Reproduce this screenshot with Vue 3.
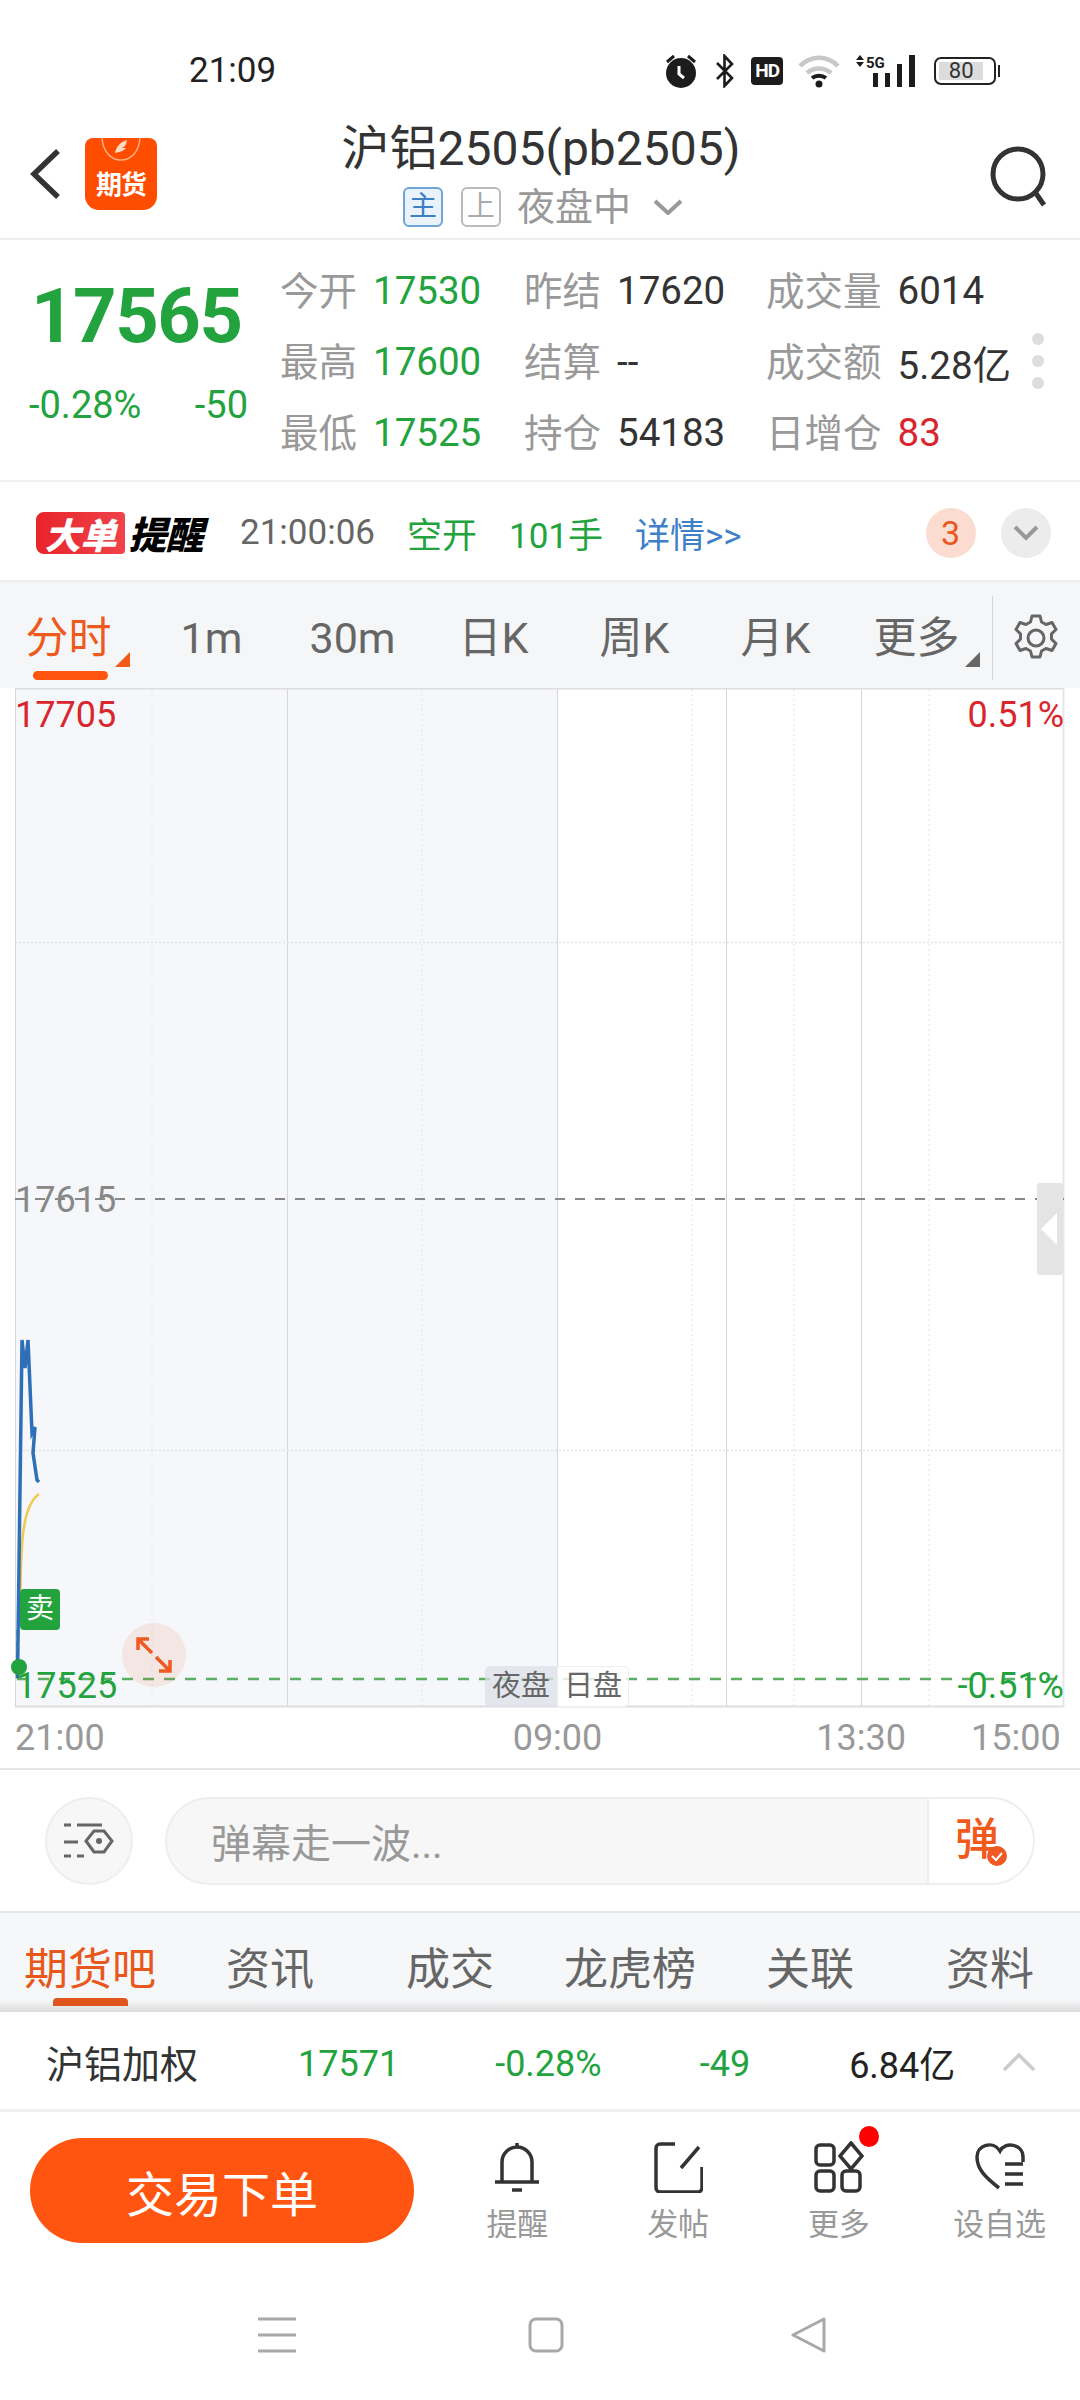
<template>
  <div class="page">
    <!-- 状态栏 -->
    <div class="status">
      <span class="clock">21:09</span>
      <div class="status-icons">
        <svg width="36" height="36" viewBox="0 0 36 36">
          <circle cx="18" cy="20" r="15" fill="#1c1c1c" />
          <path d="M4 9l7-6M32 9l-7-6" stroke="#1c1c1c" stroke-width="3" />
          <path d="M16 13v8l5 4" stroke="#fff" stroke-width="3" fill="none" />
        </svg>
        <svg width="22" height="34" viewBox="0 0 22 34">
          <path d="M3 9l15 15-7.500 8V2l7.500 8L3 25" stroke="#1c1c1c" stroke-width="2.600" fill="none" />
        </svg>
        <div class="hd">HD</div>
        <svg width="42" height="34" viewBox="0 0 42 34">
          <path d="M2 12c11-11 27-11 38 0M9 19c7-6 17-6 24 0" stroke="#c8c8c8" stroke-width="4.500" fill="none" />
          <path d="M14 24c4-3 10-3 14 0" stroke="#1c1c1c" stroke-width="4" fill="none" />
          <circle cx="21" cy="30" r="3.500" fill="#1c1c1c" />
        </svg>
        <svg width="66" height="34" viewBox="0 0 66 34">
          <path d="M5 1l4 5H1zM5 13l4-5H1z" fill="#1c1c1c" />
          <text x="11" y="14" class="five-g">5G</text>
          <path d="M18 19h5v14h-5zM30 19h5v14h-5zM42 10h5v23h-5zM54 1h6v32h-6z" fill="#1c1c1c" />
        </svg>
        <div class="battery"><span>80</span></div>
      </div>
    </div>

    <!-- 标题 -->
    <header class="head">
      <svg class="back" width="34" height="52" viewBox="0 0 34 52">
        <path d="M30 3L6 26l24 23" stroke="#333" stroke-width="5.500" fill="none" />
      </svg>
      <div class="logo">
        <svg width="72" height="28" viewBox="0 0 72 28">
          <path d="M17 0c1 14 9 22 19 22S54 14 55 0" stroke="#ffb08a" stroke-width="1.500" fill="none" />
          <path d="M42 2c-7 2-11 7-12 13 5-1 9-2 11-5-2 0-3 0-4 0 2-1 4-2 5-8z" fill="#ffd9c4" />
        </svg>
        <span>期货</span>
      </div>
      <div class="head-mid">
        <div class="head-title">沪铝2505(pb2505)</div>
        <div class="head-sub">
          <span class="tag tag-on">主</span>
          <span class="tag">上</span>
          <span class="sub-text">夜盘中</span>
          <svg width="30" height="16" viewBox="0 0 30 16">
            <path d="M2 2l13 12L28 2" stroke="#999" stroke-width="4" fill="none" />
          </svg>
        </div>
      </div>
      <svg class="search" width="60" height="62" viewBox="0 0 60 62">
        <circle cx="28" cy="28" r="25" stroke="#333" stroke-width="5" fill="none" />
        <path d="M45 46l9 13" stroke="#333" stroke-width="5" fill="none" />
      </svg>
    </header>

    <!-- 行情 -->
    <section class="quote">
      <div class="quote-main">
        <div class="price">17565</div>
        <div class="change"><span>-0.28%</span><span>-50</span></div>
      </div>
      <div class="quote-grid">
        <div v-for="item in quoteItems" :key="item.label" class="quote-item">
          <span class="q-label">{{ item.label }}</span>
          <span :class="['q-value', item.tone]">{{ item.value }}</span>
        </div>
      </div>
      <div class="dots"><i></i><i></i><i></i></div>
    </section>

    <!-- 大单提醒 -->
    <section class="alert">
      <div class="alert-logo"><span class="alert-red">大单</span><span class="alert-black">提醒</span></div>
      <span class="alert-time">21:00:06</span>
      <span class="alert-open">空开</span>
      <span class="alert-hand">101手</span>
      <span class="alert-link">详情&gt;&gt;</span>
      <span class="alert-count">3</span>
      <span class="alert-more">
        <svg width="26" height="16" viewBox="0 0 26 16">
          <path d="M2 2l11 11L24 2" stroke="#999" stroke-width="4" fill="none" />
        </svg>
      </span>
    </section>

    <!-- 周期 -->
    <nav class="periods">
      <div
        v-for="p in periods"
        :key="p.name"
        :class="['period', { 'period-on': p.on, 'period-tri': p.tri }]"
      >
        {{ p.name }}
      </div>
      <div class="gear">
        <svg width="48" height="50" viewBox="0 0 48 50">
          <path
            d="M20 3h8l1.500 6 4.500 2.500 6-2 4 7-4.500 4.300v5.400l4.500 4.300-4 7-6-2-4.500 2.500-1.500 6h-8l-1.500-6-4.500-2.500-6 2-4-7 4.500-4.300v-5.400L4 16.500l4-7 6 2 4.500-2.500z"
            stroke="#666"
            stroke-width="3"
            stroke-linejoin="round"
            fill="none"
          />
          <circle cx="24" cy="25" r="8" stroke="#666" stroke-width="3" fill="none" />
        </svg>
      </div>
    </nav>

    <!-- 分时图 -->
    <section class="chart">
      <svg class="chart-svg" width="1080" height="1020" viewBox="0 688 1080 1020">
        <rect x="15" y="688" width="542" height="1019" fill="#f5f7fa" />
        <path
          v-for="x in dottedX"
          :key="'d' + x"
          :d="`M${x} 689V1706`"
          stroke="#e4e4e4"
          stroke-width="1"
          stroke-dasharray="2 3"
        />
        <path
          v-for="x in solidX"
          :key="'s' + x"
          :d="`M${x}.5 689V1706`"
          stroke="#d6d6d6"
          stroke-width="1"
        />
        <path d="M15 942.500H1064M15 1450.500H1064" stroke="#e2e2e2" stroke-width="1.500" stroke-dasharray="2 2" />
        <path d="M15 688.500H1064M15 1706.500H1064" stroke="#dedede" stroke-width="2" />
        <path d="M1063.500 688V1707" stroke="#e6e6e6" stroke-width="2" />
        <path d="M15 1199H1064" stroke="#888" stroke-width="2" stroke-dasharray="10 10" />
        <path d="M17 1679H1064" stroke="#5cae62" stroke-width="2.500" stroke-dasharray="11 10" />
        <path d="M17.500 1630V1679" stroke="#5cae62" stroke-width="2.500" stroke-dasharray="6 5" />
        <path d="M20.500 1590C21 1540 23 1505 39 1494" stroke="#f2c94c" stroke-width="2.500" fill="none" />
        <path
          d="M17.500 1678L22 1340 25 1368 28 1340 32 1433 35 1427 33 1453 37 1480 39 1482"
          stroke="#2f6fb8"
          stroke-width="3.500"
          fill="none"
        />
        <circle cx="19" cy="1667" r="8" fill="#22a33e" />
      </svg>

      <span class="c-label c-top-left">17705</span>
      <span class="c-label c-top-right">0.51%</span>
      <span class="c-label c-mid-left">17615</span>
      <span class="c-label c-low-left">17525</span>
      <span class="c-label c-low-right">-0.51%</span>
      <span class="sell">卖</span>
      <span class="zoom-btn">
        <svg width="38" height="38" viewBox="0 0 38 38">
          <path d="M3 3l14 14M3 14V3h11M35 35L21 21M35 24v11H24" stroke="#f05a22" stroke-width="3.500" fill="none" />
        </svg>
      </span>
      <div class="handle">
        <svg width="18" height="32" viewBox="0 0 18 32"><path d="M17 0v32L1 16z" fill="#fff" /></svg>
      </div>
      <div class="session">
        <span class="session-night">夜盘</span>
        <span class="session-day">日盘</span>
      </div>
    </section>

    <div class="axis">
      <span class="axis-a">21:00</span>
      <span class="axis-b">09:00</span>
      <span class="axis-c">13:30</span>
      <span class="axis-d">15:00</span>
    </div>

    <!-- 弹幕 -->
    <section class="danmu">
      <div class="danmu-set">
        <svg width="50" height="38" viewBox="0 0 50 38">
          <path d="M0 3h7M13 3h25M0 20h14M0 34h7M13 34h7" stroke="#666" stroke-width="3" fill="none" />
          <path d="M30 9h10l8 10-8 11H30l-8-11z" stroke="#666" stroke-width="3" fill="none" />
          <circle cx="35" cy="19" r="3" fill="#666" />
        </svg>
      </div>
      <div class="danmu-input">
        <span class="danmu-hint">弹幕走一波...</span>
        <span class="danmu-send">
          弹
          <svg class="danmu-check" width="20" height="20" viewBox="0 0 20 20">
            <circle cx="10" cy="10" r="10" fill="#f05a22" />
            <path d="M5 10l4 4 6-7" stroke="#fff" stroke-width="2" fill="none" />
          </svg>
        </span>
      </div>
    </section>

    <!-- 栏目 -->
    <nav class="channels">
      <div v-for="(c, i) in channels" :key="c" :class="['channel', { 'channel-on': i === 0 }]">{{ c }}</div>
    </nav>

    <!-- 加权 -->
    <section class="index-bar">
      <span class="i-name">沪铝加权</span>
      <span class="i-price">17571</span>
      <span class="i-pct">-0.28%</span>
      <span class="i-diff">-49</span>
      <span class="i-amount">6.84亿</span>
      <svg class="i-arrow" width="34" height="20" viewBox="0 0 34 20">
        <path d="M2 18L17 3l15 15" stroke="#ccc" stroke-width="3.500" fill="none" />
      </svg>
    </section>

    <!-- 底部操作 -->
    <section class="actions">
      <button class="trade">交易下单</button>
      <div class="action">
        <svg width="50" height="52" viewBox="0 0 50 52">
          <path d="M25 2v5M10 41V21a15 15 0 0 1 30 0v20M3 41h44M20 49h10" stroke="#333" stroke-width="3.500" fill="none" />
        </svg>
        <span>提醒</span>
      </div>
      <div class="action">
        <svg width="50" height="52" viewBox="0 0 50 52">
          <path d="M22 3H7a4 4 0 0 0-4 4v40a4 4 0 0 0 4 4h38a4 4 0 0 0 4-4V26M46 6L28 27" stroke="#333" stroke-width="3.500" fill="none" />
        </svg>
        <span>发帖</span>
      </div>
      <div class="action">
        <svg width="50" height="52" viewBox="0 0 50 52">
          <rect x="2" y="4" width="18" height="20" rx="4" stroke="#333" stroke-width="3.500" fill="none" />
          <path d="M37 2l11 13-11 13-11-13z" stroke="#333" stroke-width="3.500" fill="none" />
          <rect x="2" y="30" width="18" height="20" rx="4" stroke="#333" stroke-width="3.500" fill="none" />
          <rect x="28" y="30" width="18" height="20" rx="4" stroke="#333" stroke-width="3.500" fill="none" />
        </svg>
        <i class="red-dot"></i>
        <span>更多</span>
      </div>
      <div class="action">
        <svg width="50" height="52" viewBox="0 0 50 52">
          <path d="M24 47C10 36 2 28 2 16 2 4 18-1 25 10 30 0 48 3 48 16v5" stroke="#333" stroke-width="3.500" fill="none" />
          <path d="M30 23h18M30 33h18M30 43h18" stroke="#333" stroke-width="3.500" fill="none" />
        </svg>
        <span>设自选</span>
      </div>
    </section>

    <!-- 系统导航 -->
    <footer class="sys-nav">
      <svg width="38" height="36" viewBox="0 0 38 36">
        <path d="M0 2h38M0 18h38M0 34h38" stroke="#a8a8a8" stroke-width="3" />
      </svg>
      <svg width="36" height="36" viewBox="0 0 36 36">
        <rect x="2" y="2" width="32" height="32" rx="6" stroke="#a8a8a8" stroke-width="3" fill="none" />
      </svg>
      <svg width="36" height="36" viewBox="0 0 36 36">
        <path d="M33 2v32L2 18z" stroke="#a8a8a8" stroke-width="3" stroke-linejoin="round" fill="none" />
      </svg>
    </footer>
  </div>
</template>

<script setup>
const quoteItems = [
  { label: '今开', value: '17530', tone: 'green' },
  { label: '昨结', value: '17620', tone: 'dark' },
  { label: '成交量', value: '6014', tone: 'dark' },
  { label: '最高', value: '17600', tone: 'green' },
  { label: '结算', value: '--', tone: 'dark' },
  { label: '成交额', value: '5.28亿', tone: 'dark' },
  { label: '最低', value: '17525', tone: 'green' },
  { label: '持仓', value: '54183', tone: 'dark' },
  { label: '日增仓', value: '83', tone: 'red' },
]

const periods = [
  { name: '分时', on: true, tri: true },
  { name: '1m' },
  { name: '30m' },
  { name: '日K' },
  { name: '周K' },
  { name: '月K' },
  { name: '更多', tri: true },
]

const dottedX = [152, 422, 692, 794, 929]
const solidX = [15, 287, 557, 726, 861]

const channels = ['期货吧', '资讯', '成交', '龙虎榜', '关联', '资料']
</script>

<style>
html,
body {
  margin: 0;
  background: #fff;
}
</style>

<style scoped>
.page {
  width: 1080px;
  height: 2400px;
  overflow: hidden;
  background: #fff;
  font-family: Roboto, "Noto Sans CJK SC", sans-serif;
  color: #333;
}

.status {
  height: 108px;
  box-sizing: border-box;
  padding: 51px 0 0 189px;
  display: flex;
  align-items: flex-start;
}

.clock {
  font-size: 35px;
  line-height: 40px;
  color: #222;
}

.status-icons {
  margin-left: 387px;
  display: flex;
  align-items: center;
  gap: 15px;
  height: 40px;
}

.hd {
  width: 32px;
  height: 28px;
  background: #1c1c1c;
  border-radius: 4px;
  color: #fff;
  font-size: 19px;
  font-weight: 700;
  line-height: 28px;
  text-align: center;
  letter-spacing: -1px;
}

.five-g {
  font-size: 15px;
  font-weight: 700;
  fill: #1c1c1c;
  font-family: Roboto, sans-serif;
}

.battery {
  position: relative;
  width: 62px;
  height: 28px;
  box-sizing: border-box;
  border: 2px solid #222;
  border-radius: 7px;
  padding: 3px;
  margin-left: -2px;
}

.battery::after {
  content: "";
  position: absolute;
  right: -6px;
  top: 6px;
  width: 2px;
  height: 12px;
  background: #222;
}

.battery span {
  display: block;
  width: 44px;
  height: 18px;
  background: #dcdcdc;
  font-size: 22px;
  line-height: 18px;
  text-align: center;
  color: #333;
}

.head {
  height: 132px;
  box-sizing: border-box;
  border-bottom: 2px solid #eee;
  display: flex;
  align-items: flex-start;
}

.back {
  margin: 40px 0 0 28px;
}

.logo {
  width: 72px;
  height: 72px;
  margin: 30px 0 0 23px;
  background: #ff4d00;
  border-radius: 8px 8px 14px 14px;
  color: #fff;
  text-align: center;
  overflow: hidden;
}

.logo svg {
  display: block;
}

.logo span {
  display: block;
  font-size: 26px;
  font-weight: 700;
  line-height: 34px;
  font-family: "Noto Sans CJK SC", sans-serif;
  letter-spacing: -1px;
}

.head-mid {
  width: 835px;
  margin-left: -1px;
  text-align: center;
}

.head-title {
  font-size: 48px;
  line-height: 58px;
  margin: 12px 0 0 -65px;
  color: #333;
}

.head-sub {
  display: flex;
  align-items: center;
  margin: 9px 0 0 247px;
}

.tag {
  width: 40px;
  height: 40px;
  box-sizing: border-box;
  border: 2px solid #bbb;
  border-radius: 6px;
  font-size: 28px;
  line-height: 35px;
  color: #aaa;
  margin-right: 18px;
}

.tag-on {
  background: #eaf3fb;
  border-color: #6ea4d8;
  color: #3b7fc4;
}

.sub-text {
  font-size: 38px;
  line-height: 40px;
  color: #999;
  margin: 0 22px 0 -2px;
}

.search {
  margin: 38px 0 0 -1px;
}

.quote {
  position: relative;
  height: 242px;
  box-sizing: border-box;
  border-bottom: 2px solid #f0f0f0;
  display: flex;
}

.quote-main {
  width: 280px;
  padding: 0 0 0 30px;
  box-sizing: border-box;
}

.price {
  font-size: 76px;
  font-weight: 700;
  line-height: 80px;
  letter-spacing: -1.500px;
  color: #22a33e;
  margin: 36px 0 0 1px;
}

.change {
  display: flex;
  justify-content: space-between;
  margin: 27px 32px 0 -1px;
  font-size: 38px;
  line-height: 44px;
  color: #22a33e;
}

.quote-grid {
  display: grid;
  grid-template-columns: 244px 242px 270px;
  grid-auto-rows: 71px;
  padding-top: 15px;
}

.quote-item {
  display: flex;
  align-items: center;
  white-space: nowrap;
}

.q-label {
  color: #999;
  font-size: 38.500px;
  margin: 0 16px 5px 0;
}

.q-value {
  font-size: 38.500px;
}

.green {
  color: #22a33e;
}

.dark {
  color: #333;
}

.red {
  color: #d9262e;
}

.dots {
  position: absolute;
  left: 1032px;
  top: 93px;
  display: flex;
  flex-direction: column;
  gap: 10px;
}

.dots i {
  width: 12px;
  height: 12px;
  border-radius: 50%;
  background: #ddd;
}

.alert {
  height: 100px;
  display: flex;
  align-items: center;
  border-bottom: 2px solid #eee;
  box-sizing: border-box;
  padding: 3px 0 0 36px;
  white-space: nowrap;
}

.alert-logo {
  display: flex;
  align-items: center;
  width: 170px;
  font-family: "Noto Sans CJK SC", sans-serif;
  font-weight: 900;
  font-style: italic;
}

.alert-red {
  width: 90px;
  height: 42px;
  border-radius: 8px 4px 4px 8px;
  background: linear-gradient(90deg, #e8242a, #f0434b);
  color: #fff;
  font-size: 36px;
  line-height: 42px;
  text-align: center;
}

.alert-black {
  width: 82px;
  color: #000;
  font-size: 38px;
  line-height: 42px;
  letter-spacing: -1px;
  text-align: center;
}

.alert-time {
  margin-left: 34px;
  font-size: 35px;
  color: #666;
}

.alert-open,
.alert-hand {
  color: #22a33e;
  font-size: 35px;
}

.alert-open {
  margin-left: 32px;
}

.alert-hand {
  margin-left: 32px;
}

.alert-link {
  margin-left: 32px;
  color: #3f80c8;
  font-size: 35px;
}

.alert-count,
.alert-more {
  width: 50px;
  height: 50px;
  border-radius: 50%;
  display: flex;
  align-items: center;
  justify-content: center;
}

.alert-count {
  margin-left: 184px;
  background: #fcdcd0;
  color: #e8581c;
  font-size: 34px;
}

.alert-more {
  margin-left: 25px;
  background: #ececec;
}

.periods {
  height: 106px;
  box-sizing: border-box;
  padding-top: 6px;
  background: #f5f6f8;
  display: flex;
  align-items: center;
}

.period {
  position: relative;
  width: 141px;
  text-align: center;
  font-size: 43px;
  line-height: 56px;
  color: #666;
  flex: none;
}

.period-on {
  color: #ef5a1c;
  text-indent: -4px;
}

.period-on::after {
  content: "";
  position: absolute;
  left: 33px;
  top: 61px;
  width: 75px;
  height: 9px;
  border-radius: 5px;
  background: #ff5510;
}

.period-tri::before {
  content: "";
  position: absolute;
  right: 7px;
  bottom: -1px;
  border-style: solid;
  border-width: 0 0 15px 15px;
  border-color: transparent transparent #666 transparent;
}

.period-on.period-tri::before {
  right: 11px;
  border-bottom-color: #ef5a1c;
}

.gear {
  margin-left: 5px;
  height: 84px;
  border-left: 1px solid #d5d5d5;
  padding-left: 19px;
  display: flex;
  align-items: center;
}

.chart {
  position: relative;
  height: 1019px;
}

.chart-svg {
  position: absolute;
  left: 0;
  top: 0;
}

.c-label {
  position: absolute;
  font-size: 36px;
  line-height: 40px;
  white-space: nowrap;
}

.c-top-left {
  left: 15px;
  top: 7px;
  color: #d9262e;
}

.c-top-right {
  right: 16px;
  top: 7px;
  color: #d9262e;
}

.c-mid-left {
  left: 15px;
  top: 492px;
  color: #888;
}

.c-low-left {
  left: 16px;
  top: 978px;
  color: #22a33e;
}

.c-low-right {
  right: 16px;
  top: 978px;
  color: #22a33e;
}

.sell {
  position: absolute;
  left: 20px;
  top: 901px;
  width: 40px;
  height: 41px;
  border-radius: 4px;
  background: #22a33e;
  color: #fff;
  font-size: 28px;
  line-height: 40px;
  text-align: center;
}

.zoom-btn {
  position: absolute;
  left: 122px;
  top: 935px;
  width: 64px;
  height: 64px;
  border-radius: 50%;
  background: rgba(240, 90, 34, 0.1);
  display: flex;
  align-items: center;
  justify-content: center;
}

.handle {
  position: absolute;
  left: 1037px;
  top: 495px;
  width: 26px;
  height: 92px;
  border-radius: 3px;
  background: #e4e4e4;
  display: flex;
  align-items: center;
  justify-content: flex-start;
  padding-left: 3px;
  box-sizing: border-box;
}

.session {
  position: absolute;
  left: 485px;
  top: 978px;
  height: 41px;
  display: flex;
  font-size: 29px;
  line-height: 41px;
  color: #666;
}

.session-night {
  width: 72px;
  background: rgba(220, 224, 232, 0.75);
  border-radius: 5px 0 0 5px;
  text-align: center;
}

.session-day {
  width: 72px;
  background: rgba(255, 255, 255, 0.8);
  border: 1px solid #eee;
  border-radius: 0 5px 5px 0;
  box-sizing: border-box;
  text-align: center;
  line-height: 39px;
}

.axis {
  height: 63px;
  box-sizing: border-box;
  border-bottom: 2px solid #e6e6e6;
  display: flex;
  font-size: 36px;
  line-height: 62px;
  color: #999;
}

.axis-a {
  margin-left: 15px;
}

.axis-b {
  margin-left: 408px;
}

.axis-c {
  margin-left: 214px;
}

.axis-d {
  margin-left: 65px;
}

.danmu {
  height: 143px;
  display: flex;
  align-items: center;
  padding-left: 45px;
  box-sizing: border-box;
  border-bottom: 2px solid #e6e6e6;
}

.danmu-set {
  width: 88px;
  height: 88px;
  box-sizing: border-box;
  border: 2px solid #eee;
  border-radius: 50%;
  background: #f7f7f7;
  display: flex;
  align-items: center;
  justify-content: center;
}

.danmu-input {
  width: 870px;
  height: 88px;
  margin-left: 32px;
  box-sizing: border-box;
  border: 2px solid #eee;
  border-radius: 44px;
  background: #f7f7f7;
  display: flex;
  align-items: center;
  overflow: hidden;
}

.danmu-hint {
  flex: 1;
  padding-left: 44px;
  font-size: 40px;
  color: #999;
}

.danmu-send {
  position: relative;
  width: 106px;
  height: 100%;
  background: #fff;
  border-left: 2px solid #eee;
  box-sizing: border-box;
  padding-left: 26px;
  color: #f05a1c;
  font-size: 44px;
  font-weight: 500;
  line-height: 82px;
}

.danmu-check {
  position: absolute;
  left: 58px;
  top: 47px;
}

.channels {
  position: relative;
  height: 99px;
  box-sizing: border-box;
  padding-top: 7px;
  display: flex;
  align-items: center;
  background: linear-gradient(#f6f7f9 88%, #dcdcdc);
}

.channel {
  position: relative;
  width: 180px;
  text-align: center;
  font-size: 44px;
  color: #666;
}

.channel-on {
  color: #e8581c;
}

.channel-on::after {
  content: "";
  position: absolute;
  left: 53px;
  top: 64px;
  width: 75px;
  height: 8px;
  border-radius: 4px 4px 0 0;
  background: #e0551c;
}

.index-bar {
  position: relative;
  height: 100px;
  box-sizing: border-box;
  border-bottom: 3px solid #f0f0f0;
  display: flex;
  align-items: center;
  white-space: nowrap;
  font-size: 36px;
  padding-top: 2px;
}

.i-name {
  margin-left: 46px;
  font-size: 38px;
  color: #333;
}

.i-price {
  margin: 5px 0 0 100px;
  color: #22a33e;
}

.i-pct {
  margin: 5px 0 0 96px;
  color: #22a33e;
}

.i-diff {
  margin: 5px 0 0 98px;
  color: #22a33e;
}

.i-amount {
  margin-left: 99px;
  color: #222;
}

.i-arrow {
  margin-left: 47px;
}

.actions {
  height: 148px;
  display: flex;
  align-items: flex-start;
  padding: 26px 0 0 30px;
  box-sizing: border-box;
}

.trade {
  width: 384px;
  height: 105px;
  border: 0;
  padding: 0;
  border-radius: 53px;
  background: #ff5510;
  color: #fff;
  font-family: "Noto Sans CJK SC", sans-serif;
  font-size: 48px;
  flex: none;
}

.action {
  position: relative;
  width: 161px;
  margin-top: 3px;
  display: flex;
  flex-direction: column;
  align-items: center;
  font-size: 31px;
  color: #999;
  white-space: nowrap;
}

.action:nth-child(2) {
  margin-left: 23px;
}

.action span {
  line-height: 40px;
  margin-top: 12px;
}

.red-dot {
  position: absolute;
  left: 100px;
  top: -15px;
  width: 20px;
  height: 21px;
  border-radius: 50%;
  background: #f00;
}

.sys-nav {
  height: 140px;
  box-sizing: border-box;
  padding: 57px 0 0 258px;
  display: flex;
  align-items: flex-start;
  gap: 232px;
}

.sys-nav svg:last-child {
  margin-left: -5px;
}
</style>
